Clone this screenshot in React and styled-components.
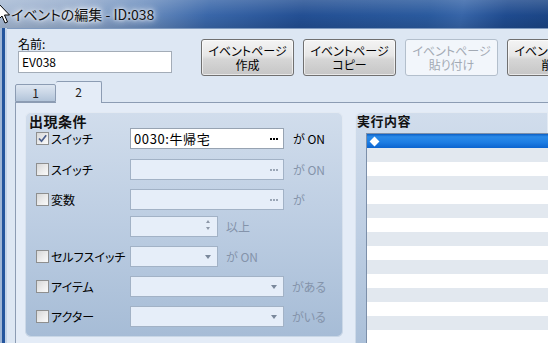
import React from "react";
import styled, { createGlobalStyle } from "styled-components";

const FONT = `"Noto Sans CJK JP", "Noto Sans", sans-serif`;

const Global = createGlobalStyle`
  html, body { margin: 0; padding: 0; }
  body {
    width: 548px; height: 343px; overflow: hidden; background: #dde7f3;
    font-family: ${FONT};
    font-feature-settings: "palt";
  }
  * { box-sizing: border-box; }
`;

const Screen = styled.div`
  position: relative;
  width: 548px;
  height: 343px;
  overflow: hidden;
  display: flex;
  flex-direction: column;
  background: #dde7f3;
  font-family: ${FONT};
  font-feature-settings: "palt";
  color: #000;
`;

const TitleBar = styled.div`
  flex: none;
  height: 28px;
  display: flex;
  align-items: center;
  padding-left: 11px;
  background:
    linear-gradient(180deg, rgba(255,255,255,0.16) 0%, rgba(255,255,255,0) 55%, rgba(0,0,0,0.1) 100%),
    linear-gradient(100deg, #a7bad4 0%, #93aacb 14%, #6d8fbf 26%, #3a67a9 38%, #234f93 55%, #2a5a9e 78%, #3765a8 84%, #1f4b8f 92%, #1b4585 100%);
`;

const TitleText = styled.span`
  font-size: 14px;
  line-height: 16px;
  color: #111;
  text-shadow: 0 0 6px rgba(255,255,255,0.95), 0 0 10px rgba(255,255,255,0.8), 0 0 3px rgba(255,255,255,0.9);
`;

const Body = styled.div`
  flex: 1;
  display: flex;
  min-height: 0;
`;

const FrameLeft = styled.div`
  flex: none;
  width: 7px;
  background: linear-gradient(90deg, #9fb6d6 0, #9fb6d6 2px, #24559d 2px, #24559d 5px, #c3d3e8 5px, #c3d3e8 7px);
`;

const Client = styled.div`
  flex: 1;
  display: flex;
  flex-direction: column;
  border-top: 1px solid #7f9abf;
  padding-left: 8px;
  background: #dde7f3;
  min-width: 0;
  overflow: hidden;
`;

const Header = styled.div`
  display: flex;
  align-items: flex-start;
  padding: 8px 0 0 3px;
`;

const NameBlock = styled.div`
  flex: none;
  width: 154px;
  display: flex;
  flex-direction: column;
`;

const SmallLabel = styled.div`
  font-size: 12px;
  line-height: 14px;
  height: 14px;
`;

const NameInput = styled.div`
  height: 22px;
  border: 1px solid #a3acb7;
  background: #fff;
  padding-left: 3px;
  font-size: 12px;
  line-height: 20px;
`;

const ButtonRow = styled.div`
  flex: none;
  display: flex;
  gap: 9px;
  margin-left: 29px;
  margin-top: 2px;
`;

const PageButton = styled.div`
  flex: none;
  width: 93px;
  height: 37px;
  border: 1px solid ${(p) => (p.$disabled ? "#b3bfcc" : "#707070")};
  border-radius: 3px;
  background: ${(p) =>
    p.$disabled
      ? "#f2f6fb"
      : "linear-gradient(180deg, #f4f4f4 0%, #e6e6e6 45%, #d6d6d6 55%, #c6c6c6 100%)"};
  box-shadow: ${(p) => (p.$disabled ? "none" : "inset 0 0 0 1px rgba(255,255,255,0.6)")};
  color: ${(p) => (p.$disabled ? "#a3aab4" : "#000")};
  display: flex;
  align-items: center;
  justify-content: center;
  text-align: center;
  font-size: 12px;
  line-height: 14px;
  white-space: pre;
`;

const TabStrip = styled.div`
  display: flex;
  align-items: flex-end;
  height: 21px;
  margin-top: 5px;
  position: relative;
  z-index: 1;
`;

const Tab = styled.div`
  flex: none;
  width: ${(p) => p.$w}px;
  height: ${(p) => (p.$active ? 22 : 18)}px;
  margin-bottom: ${(p) => (p.$active ? -1 : 0)}px;
  border: 1px solid #8c9cb3;
  border-bottom: ${(p) => (p.$active ? "none" : "1px solid #8c9cb3")};
  border-left: ${(p) => (p.$first ? "1px solid #8c9cb3" : "none")};
  border-radius: 2px 2px 0 0;
  background: ${(p) =>
    p.$active ? "#e4ecf7" : "linear-gradient(180deg, #dde6f1 0%, #c9d6e6 50%, #b2c4d9 100%)"};
  display: flex;
  justify-content: center;
  align-items: ${(p) => (p.$active ? "flex-start" : "center")};
  padding-top: ${(p) => (p.$active ? 3 : 0)}px;
  font-size: 12px;
  line-height: 14px;
  color: #222;
`;

const TabPanel = styled.div`
  flex: 1;
  display: flex;
  align-items: flex-start;
  gap: 12px;
  border-top: 1px solid #8c9cb3;
  border-left: 1px solid #8c9cb3;
  background: #e4ecf7;
  padding: 9px 0 0 9px;
  min-height: 0;
`;

const GroupBox = styled.div`
  flex: ${(p) => (p.$grow ? 1 : "none")};
  width: ${(p) => (p.$w ? `${p.$w}px` : "auto")};
  height: ${(p) => p.$h}px;
  border-radius: ${(p) => (p.$grow ? "6px 0 0 0" : "6px")};
  background: linear-gradient(180deg, #d1ddec 0%, #bccde2 50%, #a6bcd6 100%);
  box-shadow: inset 0 0 0 1px rgba(255,255,255,0.4);
  display: flex;
  flex-direction: column;
`;

const GroupTitle = styled.div`
  font-size: ${(p) => p.$size}px;
  font-weight: bold;
  line-height: 16px;
  height: ${(p) => p.$h}px;
  padding-left: ${(p) => p.$pl}px;
  padding-top: 1px;
  letter-spacing: 0.5px;
  color: #111;
`;

const Rows = styled.div`
  display: flex;
  flex-direction: column;
  padding-left: 11px;
`;

const Row = styled.div`
  display: flex;
  align-items: center;
  height: 21px;
  margin-top: ${(p) => p.$mt}px;
`;

const CheckCell = styled.div`
  flex: none;
  width: 94px;
  display: flex;
  align-items: center;
  gap: 2px;
`;

const Box = styled.div`
  flex: none;
  width: 13px;
  height: 13px;
  border: 1px solid #8e8f8f;
  background: linear-gradient(135deg, #d6d7d8 0%, #ececec 55%, #fafafa 100%);
  display: flex;
  align-items: center;
  justify-content: center;
`;

const CheckLabel = styled.span`
  font-size: 12px;
  line-height: 14px;
  white-space: nowrap;
  color: #000;
`;

const Field = styled.div`
  position: relative;
  flex: none;
  width: ${(p) => p.$w}px;
  height: 21px;
  border: 1px solid ${(p) => (p.$on ? "#97a3b2" : "#a2b2c6")};
  background: ${(p) => (p.$on ? "#fff" : "#e6eef9")};
  padding-left: 3px;
  display: flex;
  align-items: center;
  font-size: 13px;
  line-height: 15px;
  white-space: nowrap;
`;

const FieldText = styled.span`
  letter-spacing: 0.6px;
`;

const Dots = styled.span`
  position: absolute;
  right: 5px;
  top: 9px;
  display: flex;
  gap: 1px;
`;

const Dot = styled.span`
  width: 2px;
  height: 2px;
  background: ${(p) => (p.$on ? "#000" : "#9aa6b6")};
`;

const Arrow = styled.span`
  position: absolute;
  right: 6px;
  top: 8px;
  width: 0;
  height: 0;
  border-left: 3px solid transparent;
  border-right: 3px solid transparent;
  border-top: 4px solid #7a889b;
`;

const Spin = styled.span`
  position: absolute;
  right: 7px;
  top: 3px;
  display: flex;
  flex-direction: column;
  gap: 4px;
`;

const SpinTri = styled.span`
  width: 0;
  height: 0;
  border-left: 2.5px solid transparent;
  border-right: 2.5px solid transparent;
  ${(p) => (p.$up ? "border-bottom: 3px solid #8d98a8;" : "border-top: 3px solid #8d98a8;")}
`;

const Suffix = styled.span`
  margin-left: ${(p) => p.$ml}px;
  font-size: 12px;
  line-height: 14px;
  white-space: nowrap;
  color: ${(p) => (p.$on ? "#000" : "#8493aa")};
`;

const ListBox = styled.div`
  flex: 1;
  margin-left: 11px;
  border-top: 1px solid #7c8fa9;
  border-left: 1px solid #7c8fa9;
  background: #fff;
  overflow: hidden;
  display: flex;
  flex-direction: column;
`;

const ListRow = styled.div`
  flex: none;
  height: 14px;
  display: flex;
  align-items: center;
  background: ${(p) =>
    p.$sel
      ? "linear-gradient(180deg, #0b5fc6 0%, #2a8ae8 20%, #1d7de3 60%, #0b64cf 100%)"
      : p.$alt
      ? "#e2e8ef"
      : "#fff"};
`;

const Diamond = styled.span`
  width: 7px;
  height: 7px;
  margin-left: 4px;
  background: #fff;
  transform: rotate(45deg);
`;

const Cursor = styled.svg`
  position: absolute;
  left: -3px;
  top: 2px;
  z-index: 5;
`;

function Check({ checked }) {
  return (
    <Box>
      {checked && (
        <svg width="11" height="11" viewBox="0 0 11 11">
          <path d="M2 5.5 L4.5 8.2 L9.2 2.2" fill="none" stroke="#4a5e8c" strokeWidth="1.7" />
        </svg>
      )}
    </Box>
  );
}

const condRows = [
  { mt: 0, check: true, checked: true, label: "スイッチ", w: 154, on: true, text: "0030:牛帰宅", trail: "dots", suffix: "が ON", sml: 9 },
  { mt: 10, check: true, label: "スイッチ", w: 154, trail: "dots", suffix: "が ON", sml: 9 },
  { mt: 9, check: true, label: "変数", w: 154, trail: "dots", suffix: "が", sml: 9 },
  { mt: 6, check: false, w: 88, trail: "spin", suffix: "以上", sml: 8 },
  { mt: 9, check: true, label: "セルフスイッチ", w: 88, trail: "arrow", suffix: "が ON", sml: 8 },
  { mt: 9, check: true, label: "アイテム", w: 154, trail: "arrow", suffix: "がある", sml: 8 },
  { mt: 9, check: true, label: "アクター", w: 154, trail: "arrow", suffix: "がいる", sml: 8 },
];

const pageButtons = [
  { text: "イベントページ\n作成" },
  { text: "イベントページ\nコピー" },
  { text: "イベントページ\n貼り付け", disabled: true },
  { text: "イベントページ\n削除" },
];

function Trail({ kind, on }) {
  if (kind === "dots")
    return (
      <Dots>
        <Dot $on={on} />
        <Dot $on={on} />
        <Dot $on={on} />
      </Dots>
    );
  if (kind === "arrow") return <Arrow />;
  return (
    <Spin>
      <SpinTri $up />
      <SpinTri />
    </Spin>
  );
}

export default function App() {
  const listRows = Array.from({ length: 16 }, (_, i) => i);
  return (
    <Screen>
      <Global />
      <TitleBar>
        <TitleText>イベントの編集 - ID:038</TitleText>
      </TitleBar>
      <Body>
        <FrameLeft />
        <Client>
          <Header>
            <NameBlock>
              <SmallLabel>名前:</SmallLabel>
              <NameInput>EV038</NameInput>
            </NameBlock>
            <ButtonRow>
              {pageButtons.map((b, i) => (
                <PageButton key={i} $disabled={b.disabled}>
                  {b.text}
                </PageButton>
              ))}
            </ButtonRow>
          </Header>
          <TabStrip>
            <Tab $w={41} $first>1</Tab>
            <Tab $w={46} $active>2</Tab>
          </TabStrip>
          <TabPanel>
            <GroupBox $w={318} $h={225}>
              <GroupTitle $size={14} $h={16} $pl={4}>出現条件</GroupTitle>
              <Rows>
                {condRows.map((r, i) => (
                  <Row key={i} $mt={r.mt}>
                    <CheckCell>
                      {r.check && (
                        <>
                          <Check checked={r.checked} />
                          <CheckLabel>{r.label}</CheckLabel>
                        </>
                      )}
                    </CheckCell>
                    <Field $w={r.w} $on={r.on}>
                      {r.text && <FieldText>{r.text}</FieldText>}
                      <Trail kind={r.trail} on={r.on} />
                    </Field>
                    <Suffix $ml={r.sml} $on={r.on}>{r.suffix}</Suffix>
                  </Row>
                ))}
              </Rows>
            </GroupBox>
            <GroupBox $grow $h={260}>
              <GroupTitle $size={13} $h={21} $pl={2}>実行内容</GroupTitle>
              <ListBox>
                {listRows.map((i) => (
                  <ListRow key={i} $sel={i === 0} $alt={i % 2 === 1}>
                    {i === 0 && <Diamond />}
                  </ListRow>
                ))}
              </ListBox>
            </GroupBox>
          </TabPanel>
        </Client>
      </Body>
      <Cursor width="14" height="24" viewBox="0 0 14 24">
        <path d="M1 1 L1 18 L5 14 L8 21 L10.5 20 L7.5 13 L12.5 13 Z" fill="#fff" stroke="#000" strokeWidth="1" strokeLinejoin="round" />
      </Cursor>
    </Screen>
  );
}
